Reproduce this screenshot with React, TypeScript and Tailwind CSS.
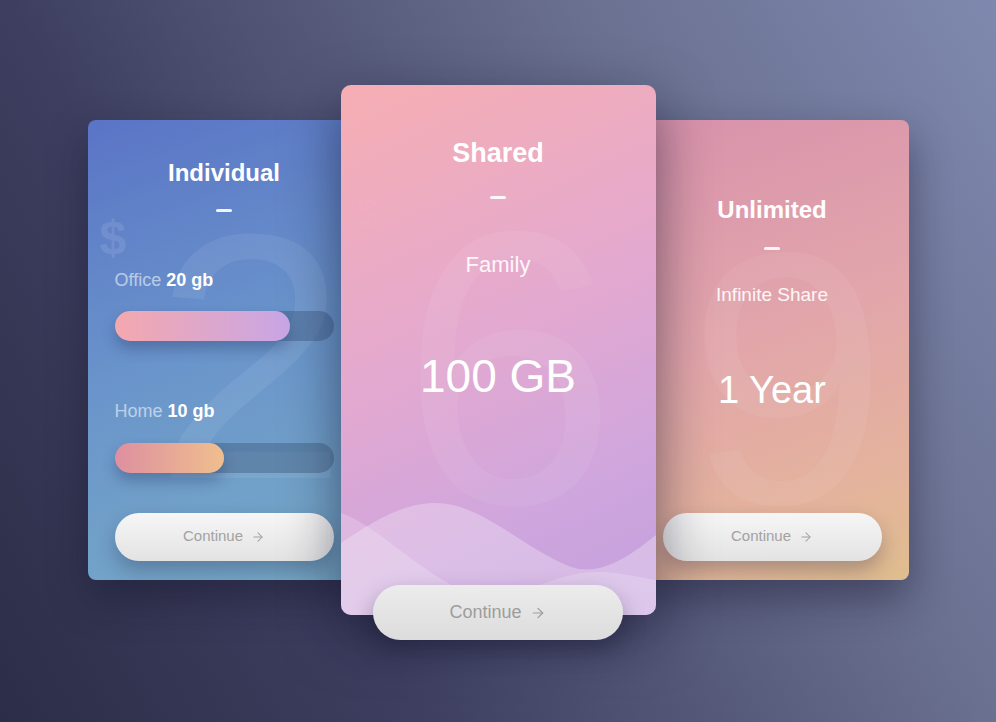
import React from "react";
import { ArrowRight } from "lucide-react";

function ContinueButton({ big = false }: { big?: boolean }) {
  return (
    <button
      className={
        big
          ? "w-[250px] h-[55px] rounded-full bg-[linear-gradient(180deg,#ececec,#dcdcdc)] shadow-[0_10px_22px_rgba(20,20,45,0.35)] flex items-center justify-center gap-2 text-[18px] text-[#9d9d9d]"
          : "w-full h-[48px] rounded-full bg-[linear-gradient(180deg,#f6f6f6,#e3e3e3)] shadow-[0_10px_20px_rgba(30,30,60,0.28)] flex items-center justify-center gap-2 text-[15px] text-[#a2a2a2]"
      }
      style={{ fontFamily: '"Liberation Sans", Arial, sans-serif' }}
    >
      <span>Continue</span>
      <ArrowRight className={big ? "w-4 h-4" : "w-3.5 h-3.5"} strokeWidth={1.8} />
    </button>
  );
}

function Dash() {
  return <div className="w-[16px] h-[2.5px] bg-white/90 rounded-full mx-auto" />;
}

function Bar({ fill, from, to }: { fill: number; from: string; to: string }) {
  return (
    <div className="w-full h-[30px] rounded-full bg-[rgba(45,65,100,0.32)] relative">
      <div
        className="h-full rounded-full shadow-[0_8px_14px_rgba(30,40,80,0.3)]"
        style={{ width: `${fill}%`, background: `linear-gradient(90deg, ${from}, ${to})` }}
      />
    </div>
  );
}

export default function App() {
  const font = { fontFamily: '"Liberation Sans", Arial, sans-serif' };
  return (
    <div
      className="w-[996px] h-[722px] overflow-hidden bg-[linear-gradient(60deg,#2c2d47_0%,#3e3f60_30%,#6a7090_70%,#7f89af_100%)] flex items-center justify-center pb-[22px]"
      style={font}
    >
      <div className="flex items-center">
        {/* Left card */}
        <div className="relative w-[273px] h-[460px] rounded-[8px] overflow-hidden bg-[linear-gradient(160deg,#5a74c6_0%,#6a95cb_50%,#77aac6_100%)] shadow-[0_18px_40px_rgba(20,20,45,0.45)] px-[27px]">
          <div className="absolute left-[66px] top-[62px] text-[350px] leading-none text-white/[0.07] select-none" aria-hidden="true">2</div>
          <div className="absolute left-[12px] top-[94px] text-[48px] font-bold leading-none text-white/[0.1]" aria-hidden="true">$</div>
          <div className="relative w-[219px] flex flex-col">
            <div className="mt-[41px] text-[24px] font-bold leading-none text-white text-center">Individual</div>
            <div className="mt-[24px]"><Dash /></div>
            <div className="mt-[59px] text-[18px] leading-none text-white">
              <span className="text-white/55">Office</span> <span className="font-bold">20 gb</span>
            </div>
            <div className="mt-[22px]"><Bar fill={80} from="#f4a8ae" to="#c8a6e6" /></div>
            <div className="mt-[61px] text-[18px] leading-none text-white">
              <span className="text-white/55">Home</span> <span className="font-bold">10 gb</span>
            </div>
            <div className="mt-[23px]"><Bar fill={50} from="#de8fa0" to="#efbf8e" /></div>
            <div className="mt-[40px]"><ContinueButton /></div>
          </div>
        </div>

        {/* Center card */}
        <div className="relative z-10 -mx-[20px] w-[315px] h-[530px]">
          <div className="relative w-full h-full rounded-[10px] overflow-hidden bg-[linear-gradient(155deg,#f6aeb2_0%,#e4a9cf_45%,#d0a6dd_75%,#c3a0dd_100%)] shadow-[0_20px_55px_rgba(15,15,40,0.55)] flex flex-col items-center">
            <div className="absolute left-[60px] top-[88px] text-[390px] leading-none text-white/[0.06] select-none" aria-hidden="true">6</div>
            <div className="absolute left-[16px] top-[108px] text-[40px] font-bold leading-none text-white/[0.04]" aria-hidden="true">$</div>
            <svg className="absolute left-0 bottom-0" width="315" height="120" viewBox="0 0 315 120">
              <path d="M0 48 C 30 28, 60 8, 95 8 C 140 8, 185 55, 230 72 C 260 82, 290 60, 315 40 L315 120 L0 120 Z" fill="rgba(255,255,255,0.28)" />
              <path d="M0 18 C 35 30, 70 70, 120 95 C 160 112, 200 85, 240 78 C 270 74, 295 82, 315 85 L315 120 L0 120 Z" fill="rgba(255,255,255,0.2)" />
            </svg>
            <div className="relative mt-[55px] text-[27px] font-bold leading-none text-white">Shared</div>
            <div className="relative mt-[29px]"><Dash /></div>
            <div className="relative mt-[55px] text-[22px] leading-none text-white/90">Family</div>
            <div className="relative mt-[77px] text-[46px] leading-none text-white">100 GB</div>
          </div>
          <div className="absolute left-[32px] top-[500px]">
            <ContinueButton big />
          </div>
        </div>

        {/* Right card */}
        <div className="relative w-[273px] h-[460px] rounded-[8px] overflow-hidden bg-[linear-gradient(160deg,#d892ab_0%,#e2a5ab_45%,#e4b39c_80%,#dfbe8e_100%)] shadow-[0_18px_40px_rgba(20,20,45,0.45)] flex justify-end pr-[27px]">
          <div className="absolute left-[52px] top-[78px] text-[360px] leading-none text-white/[0.06] select-none" aria-hidden="true">9</div>
          <div className="relative w-[219px] flex flex-col items-center">
            <div className="mt-[78px] text-[24px] font-bold leading-none text-white">Unlimited</div>
            <div className="mt-[25px]"><Dash /></div>
            <div className="mt-[35px] text-[19px] leading-none text-white/90">Infinite Share</div>
            <div className="mt-[67px] text-[38px] leading-none text-white">1 Year</div>
            <div className="mt-[104px] w-full"><ContinueButton /></div>
          </div>
        </div>
      </div>
    </div>
  );
}
